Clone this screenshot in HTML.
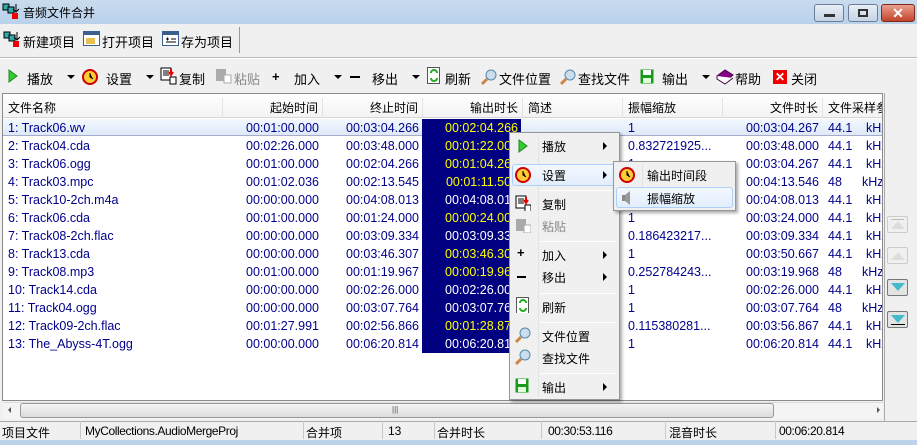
<!DOCTYPE html>
<html><head><meta charset="utf-8"><style>
*{margin:0;padding:0;box-sizing:border-box}
body{width:917px;height:445px;overflow:hidden;background:#f0f0f0;font-family:"Liberation Sans","Noto Sans CJK SC",sans-serif;font-size:12px;color:#000;position:relative}
.a{position:absolute;white-space:nowrap}
.title{left:0;top:0;width:917px;height:24px;background:linear-gradient(#c9dbee,#b9d1ea)}
.wb{top:4px;height:18px;border:1px solid #6c7d95;border-radius:3px;background:linear-gradient(#e8eef6,#c5d3e5)}
.list{left:2px;top:93px;width:881px;height:308px;background:#fff;border:1px solid #8a8a8a;overflow:hidden}
.hdr{left:0;top:0;width:881px;height:24px;background:linear-gradient(#fff,#f3f3f3);border-bottom:1px solid #d5d5d5}
.hc{position:absolute;top:4px;height:20px;border-right:1px solid #e3e3e3}
.row{position:absolute;left:0;width:881px;height:18px;color:#00008b;font-size:12.5px}
.row span{position:absolute;top:2px}
.menu{left:509px;top:132px;width:111px;height:268px;background:#f0f0f0;border:1px solid #979797;box-shadow:2px 2px 3px rgba(0,0,0,.35)}
.mi{position:absolute;left:32px}
.sep{position:absolute;left:30px;width:76px;height:1px;background:#d7d7d7;border-bottom:1px solid #fff}
.arr{position:absolute;left:93px;width:0;height:0;border-top:4px solid transparent;border-bottom:4px solid transparent;border-left:4px solid #000}
.hl{position:absolute;border:1px solid #aecff7;border-radius:3px;background:linear-gradient(#f3f8fe,#e2eefc)}
.ico{position:absolute;width:16px;height:16px}
.ss{position:absolute;top:-3px;width:1px;height:18px;background:#c8c8c8}
</style></head><body>
<div class="a title"></div>
<svg class="a" style="left:2px;top:3px" width="18" height="18"><rect x="1" y="1" width="6" height="6" fill="#3aa" stroke="#000"/><rect x="6" y="4" width="6" height="6" fill="#3aa" stroke="#000"/><rect x="10" y="10" width="6" height="6" fill="#e00"/><path d="M14 1v7M11 6l3 3 3-3" stroke="#000" fill="none"/></svg>
<div class="a" style="left:23px;top:4px;font-size:12px">音频文件合并</div>
<div class="a wb" style="left:814px;width:30px"><div class="a" style="left:9px;top:9px;width:11px;height:3px;background:#333"></div></div>
<div class="a wb" style="left:848px;width:30px"><div class="a" style="left:9px;top:4px;width:10px;height:8px;border:2px solid #333"></div></div>
<div class="a" style="left:881px;top:4px;width:34px;height:18px;border:1px solid #7a2a1a;border-radius:3px;background:linear-gradient(#e8a08e,#c4442a);color:#fff;font-weight:bold;font-size:14px;text-align:center;line-height:16px">✕</div>

<div class="a" style="left:0;top:24px;width:917px;height:33px;background:#f0f0f0"></div>
<svg class="a" style="left:3px;top:31px" width="18" height="18"><rect x="1" y="1" width="6" height="6" fill="#3aa" stroke="#000"/><rect x="6" y="4" width="6" height="6" fill="#3aa" stroke="#000"/><rect x="10" y="10" width="6" height="6" fill="#e00"/><path d="M14 1v7M11 6l3 3 3-3" stroke="#000" fill="none"/></svg>
<div class="a" style="left:23px;top:32px;font-size:13px">新建项目</div>
<svg class="a" style="left:83px;top:31px" width="18" height="16"><rect x="0.5" y="0.5" width="16" height="14" fill="#fff" stroke="#3b5f8f"/><rect x="1" y="1" width="15" height="3" fill="#3b5f8f"/><rect x="3" y="7" width="9" height="6" fill="#e8c050"/></svg>
<div class="a" style="left:102px;top:32px;font-size:13px">打开项目</div>
<svg class="a" style="left:162px;top:31px" width="18" height="16"><rect x="0.5" y="0.5" width="16" height="14" fill="#fff" stroke="#3b5f8f"/><rect x="1" y="1" width="15" height="3" fill="#3b5f8f"/><path d="M4 8h3M5.5 6.5v3M9 8h5M4 11h10" stroke="#000"/></svg>
<div class="a" style="left:181px;top:32px;font-size:13px">存为项目</div>
<div class="a" style="left:239px;top:27px;width:1px;height:26px;background:#999"></div>
<div class="a" style="left:0;top:57px;width:917px;height:1px;background:#b8b8b8"></div>
<div class="a" style="left:0;top:58px;width:917px;height:1px;background:#fff"></div>

<div class="a" style="top:69px;left:0;font-size:13px;width:917px;height:16px">
<svg class="a" style="left:8px;top:0" width="10" height="14"><path d="M1 1L9 7 1 13Z" fill="#3c3" stroke="#1a8a1a"/></svg>
<span class="a" style="left:27px">播放</span><span class="a" style="left:67px;top:6px;border-left:4px solid transparent;border-right:4px solid transparent;border-top:4px solid #000"></span>
<svg class="a" style="left:82px;top:0" width="16" height="16"><circle cx="8" cy="8" r="7" fill="#fc3" stroke="#c00" stroke-width="2"/><path d="M8 4v4l3 2" stroke="#000"/></svg>
<span class="a" style="left:106px">设置</span><span class="a" style="left:146px;top:6px;border-left:4px solid transparent;border-right:4px solid transparent;border-top:4px solid #000"></span>
<svg class="a" style="left:160px;top:-2px" width="18" height="18"><rect x="1" y="1" width="10" height="12" fill="#fff" stroke="#000"/><path d="M3 4h6M3 6h6M3 8h6" stroke="#000"/><path d="M11 2v5M9 5l2 3 2-3" stroke="#e00" stroke-width="2"/><rect x="10" y="10" width="6" height="7" fill="#fff" stroke="#000"/></svg>
<span class="a" style="left:179px">复制</span>
<svg class="a" style="left:215px;top:-2px" width="18" height="18"><rect x="1" y="2" width="10" height="12" fill="#aaa"/><rect x="9" y="8" width="7" height="8" fill="#fff" stroke="#aaa"/></svg>
<span class="a" style="left:234px;color:#888">粘贴</span>
<span class="a" style="left:272px;font-weight:bold">+</span>
<span class="a" style="left:294px">加入</span><span class="a" style="left:334px;top:6px;border-left:4px solid transparent;border-right:4px solid transparent;border-top:4px solid #000"></span>
<span class="a" style="left:350px;top:7px;width:10px;height:2px;background:#000"></span>
<span class="a" style="left:372px">移出</span><span class="a" style="left:412px;top:6px;border-left:4px solid transparent;border-right:4px solid transparent;border-top:4px solid #000"></span>
<svg class="a" style="left:427px;top:-2px" width="14" height="18"><rect x="0.5" y="0.5" width="12" height="16" fill="#fff" stroke="#555"/><path d="M4 6a3 3 0 0 1 6 0M10 11a3 3 0 0 1-6 0" stroke="#2a2" stroke-width="2" fill="none"/></svg>
<span class="a" style="left:445px">刷新</span>
<svg class="a" style="left:481px;top:0" width="16" height="16"><circle cx="10" cy="6" r="5" fill="#cde" stroke="#58a"/><path d="M6 10L1 15" stroke="#c84" stroke-width="3"/></svg>
<span class="a" style="left:499px">文件位置</span>
<svg class="a" style="left:560px;top:0" width="16" height="16"><circle cx="10" cy="6" r="5" fill="#cde" stroke="#58a"/><path d="M6 10L1 15" stroke="#c84" stroke-width="3"/></svg>
<span class="a" style="left:578px">查找文件</span>
<svg class="a" style="left:640px;top:0" width="15" height="16"><rect x="0.5" y="0.5" width="13" height="14" fill="#1a9a1a"/><rect x="3" y="1" width="8" height="5" fill="#fff"/><rect x="3" y="9" width="8" height="5" fill="#dfd"/></svg>
<span class="a" style="left:662px">输出</span><span class="a" style="left:702px;top:6px;border-left:4px solid transparent;border-right:4px solid transparent;border-top:4px solid #000"></span>
<svg class="a" style="left:716px;top:0" width="18" height="16"><path d="M1 7L9 1 17 6 9 13Z" fill="#808" stroke="#404"/><path d="M1 7v3l8 5 8-6" stroke="#404" fill="#fff"/></svg>
<span class="a" style="left:735px">帮助</span>
<div class="a" style="left:773px;top:1px;width:14px;height:14px;background:#e00;color:#fff;font-weight:bold;font-size:12px;line-height:14px;text-align:center">✕</div>
<span class="a" style="left:791px">关闭</span>
</div>

<div class="a list">
<div class="a hdr">
<div class="hc" style="left:0;width:220px"><span class="a" style="left:5px;top:1px">文件名称</span></div>
<div class="hc" style="left:220px;width:100px"><span class="a" style="right:4px;top:1px">起始时间</span></div>
<div class="hc" style="left:320px;width:100px"><span class="a" style="right:4px;top:1px">终止时间</span></div>
<div class="hc" style="left:420px;width:100px"><span class="a" style="right:4px;top:1px">输出时长</span></div>
<div class="hc" style="left:520px;width:100px"><span class="a" style="left:5px;top:1px">简述</span></div>
<div class="hc" style="left:620px;width:100px"><span class="a" style="left:5px;top:1px">振幅缩放</span></div>
<div class="hc" style="left:720px;width:100px"><span class="a" style="right:4px;top:1px">文件时长</span></div>
<div class="hc" style="left:820px;width:70px"><span class="a" style="left:5px;top:1px">文件采样参</span></div>
</div>
<div class="a" style="left:419px;top:25px;width:99px;height:234px;background:#000080"></div>
<div class="a" style="left:0;top:25px;width:419px;height:17px;background:linear-gradient(#f3f8fe,#dde9f8);border-bottom:1px solid #aac"></div>
<div class="a" style="left:518px;top:25px;width:363px;height:17px;background:linear-gradient(#f3f8fe,#dde9f8);border-bottom:1px solid #aac"></div>
<div id="rows"></div>
</div>

<script>
var d=[["1: Track06.wv","00:01:00.000","00:03:04.266","00:02:04.266","1","00:03:04.267","44.1",1],
["2: Track04.cda","00:02:26.000","00:03:48.000","00:01:22.000","0.832721925...","00:03:48.000","44.1",1],
["3: Track06.ogg","00:01:00.000","00:02:04.266","00:01:04.267","1","00:03:04.267","44.1",1],
["4: Track03.mpc","00:01:02.036","00:02:13.545","00:01:11.509","","00:04:13.546","48",1],
["5: Track10-2ch.m4a","00:00:00.000","00:04:08.013","00:04:08.013","","00:04:08.013","44.1",0],
["6: Track06.cda","00:01:00.000","00:01:24.000","00:00:24.000","1","00:03:24.000","44.1",1],
["7: Track08-2ch.flac","00:00:00.000","00:03:09.334","00:03:09.334","0.186423217...","00:03:09.334","44.1",0],
["8: Track13.cda","00:00:00.000","00:03:46.307","00:03:46.307","1","00:03:50.667","44.1",1],
["9: Track08.mp3","00:01:00.000","00:01:19.967","00:00:19.967","0.252784243...","00:03:19.968","48",1],
["10: Track14.cda","00:00:00.000","00:02:26.000","00:02:26.000","1","00:02:26.000","44.1",0],
["11: Track04.ogg","00:00:00.000","00:03:07.764","00:03:07.764","1","00:03:07.764","48",0],
["12: Track09-2ch.flac","00:01:27.991","00:02:56.866","00:01:28.876","0.115380281...","00:03:56.867","44.1",1],
["13: The_Abyss-4T.ogg","00:00:00.000","00:06:20.814","00:06:20.814","1","00:06:20.814","44.1",0]];
var h="";d.forEach(function(r,i){var t=25+i*18;var k=r[6]=="48"?"left:859px":"left:863px";
h+='<div class="row" style="top:'+t+'px"><span style="left:5px">'+r[0]+'</span><span style="right:565px">'+r[1]+'</span><span style="right:465px">'+r[2]+'</span><span style="right:366px;color:'+(r[7]?'#ff0':'#fff')+'">'+r[3]+'</span><span style="left:625px">'+r[4]+'</span><span style="right:65px">'+r[5]+'</span><span style="left:825px">'+r[6]+'</span><span style="'+k+'">kHz</span></div>';});
document.getElementById("rows").innerHTML=h;
</script>

<div class="a" style="left:3px;top:402px;width:880px;height:17px;background:#f4f4f4;border-top:1px solid #ddd"></div>
<div class="a" style="left:20px;top:403px;width:754px;height:15px;border:1px solid #999;border-radius:3px;background:linear-gradient(#f4f4f4,#dcdcdc)"></div>
<div class="a" style="left:392px;top:405px;font-size:8px;color:#555">|||</div>
<div class="a" style="left:8px;top:407px;border-top:3px solid transparent;border-bottom:3px solid transparent;border-right:3px solid #555"></div>
<div class="a" style="left:877px;top:407px;border-top:3px solid transparent;border-bottom:3px solid transparent;border-left:3px solid #555"></div>

<div class="a" style="left:884px;top:93px;width:33px;height:328px;background:#f0f0f0;border-left:1px solid #aaa"></div>
<div class="a" style="left:887px;top:216px;width:21px;height:17px;border:1px solid #ccc;border-radius:2px;background:#f0f0f0"><div class="a" style="left:3px;top:2px;width:13px;height:1px;background:#bbb"></div><div class="a" style="left:3px;top:4px;border-left:7px solid transparent;border-right:7px solid transparent;border-bottom:8px solid #ddd"></div></div>
<div class="a" style="left:887px;top:247px;width:21px;height:17px;border:1px solid #ccc;border-radius:2px;background:#f0f0f0"><div class="a" style="left:3px;top:4px;border-left:7px solid transparent;border-right:7px solid transparent;border-bottom:8px solid #ddd"></div></div>
<div class="a" style="left:887px;top:279px;width:21px;height:17px;border:1px solid #777;border-radius:2px;background:#e4e4e4"><div class="a" style="left:3px;top:3px;border-left:7px solid transparent;border-right:7px solid transparent;border-top:8px solid #4bc"></div></div>
<div class="a" style="left:887px;top:311px;width:21px;height:17px;border:1px solid #777;border-radius:2px;background:#e4e4e4"><div class="a" style="left:3px;top:3px;border-left:7px solid transparent;border-right:7px solid transparent;border-top:8px solid #4bc"></div><div class="a" style="left:3px;top:12px;width:14px;height:1px;background:#000"></div></div>

<div class="a" style="left:0;top:421px;width:917px;height:24px;background:#f0f0f0;border-top:1px solid #aaa"></div>
<div class="a" style="left:0;top:440px;width:917px;height:5px;background:#bcd3ea"></div>
<div class="a" style="top:424px;left:0;font-size:12px;width:917px;height:16px">
<span class="a" style="left:2px">项目文件</span><span class="ss" style="left:80px"></span>
<span class="a" style="left:85px;letter-spacing:-.4px">MyCollections.AudioMergeProj</span><span class="ss" style="left:303px"></span>
<span class="a" style="left:306px">合并项</span><span class="ss" style="left:382px"></span>
<span class="a" style="left:388px">13</span><span class="ss" style="left:434px"></span>
<span class="a" style="left:437px">合并时长</span><span class="ss" style="left:541px"></span>
<span class="a" style="left:548px;letter-spacing:-.4px">00:30:53.116</span><span class="ss" style="left:665px"></span>
<span class="a" style="left:669px">混音时长</span><span class="ss" style="left:775px"></span>
<span class="a" style="left:779px;letter-spacing:-.4px">00:06:20.814</span>
</div>

<div class="a menu">
<div class="a" style="left:28px;top:2px;width:1px;height:262px;background:#e2e3e3"></div>
<div class="hl" style="left:2px;top:31px;width:106px;height:22px"></div>
<svg class="ico" style="left:8px;top:6px" width="10" height="14"><path d="M1 1L9 7 1 13Z" fill="#3c3" stroke="#1a8a1a"/></svg>
<span class="mi" style="top:5px">播放</span><span class="arr" style="top:9px"></span>
<svg class="ico" style="left:5px;top:34px"><circle cx="8" cy="8" r="7" fill="#fc3" stroke="#c00" stroke-width="2"/><path d="M8 4v4l3 2" stroke="#000"/></svg>
<span class="mi" style="top:34px">设置</span><span class="arr" style="top:38px"></span>
<div class="sep" style="top:57px"></div>
<svg class="ico" style="left:5px;top:62px" width="18" height="18"><rect x="1" y="1" width="10" height="12" fill="#fff" stroke="#000"/><path d="M3 4h6M3 6h6M3 8h6" stroke="#000"/><path d="M11 2v5M9 5l2 3 2-3" stroke="#e00" stroke-width="2"/><rect x="10" y="10" width="6" height="7" fill="#fff" stroke="#000"/></svg>
<span class="mi" style="top:63px">复制</span>
<svg class="ico" style="left:5px;top:84px" width="18" height="18"><rect x="1" y="2" width="10" height="12" fill="#aaa"/><rect x="9" y="8" width="7" height="8" fill="#fff" stroke="#aaa"/></svg>
<span class="mi" style="top:85px;color:#888">粘贴</span>
<div class="sep" style="top:108px"></div>
<span class="a" style="left:7px;top:112px;font-weight:bold;font-size:13px">+</span>
<span class="mi" style="top:114px">加入</span><span class="arr" style="top:118px"></span>
<span class="a" style="left:7px;top:143px;width:9px;height:2px;background:#000"></span>
<span class="mi" style="top:136px">移出</span><span class="arr" style="top:140px"></span>
<div class="sep" style="top:160px"></div>
<svg class="ico" style="left:6px;top:164px" width="14" height="18"><rect x="0.5" y="0.5" width="12" height="16" fill="#fff" stroke="#555"/><path d="M4 6a3 3 0 0 1 6 0M10 11a3 3 0 0 1-6 0" stroke="#2a2" stroke-width="2" fill="none"/></svg>
<span class="mi" style="top:166px">刷新</span>
<div class="sep" style="top:189px"></div>
<svg class="ico" style="left:5px;top:194px"><circle cx="10" cy="6" r="5" fill="#cde" stroke="#58a"/><path d="M6 10L1 15" stroke="#c84" stroke-width="3"/></svg>
<span class="mi" style="top:195px">文件位置</span>
<svg class="ico" style="left:5px;top:216px"><circle cx="10" cy="6" r="5" fill="#cde" stroke="#58a"/><path d="M6 10L1 15" stroke="#c84" stroke-width="3"/></svg>
<span class="mi" style="top:217px">查找文件</span>
<div class="sep" style="top:240px"></div>
<svg class="ico" style="left:5px;top:245px" width="15" height="16"><rect x="0.5" y="0.5" width="13" height="14" fill="#1a9a1a"/><rect x="3" y="1" width="8" height="5" fill="#fff"/><rect x="3" y="9" width="8" height="5" fill="#dfd"/></svg>
<span class="mi" style="top:246px">输出</span><span class="arr" style="top:250px"></span>
</div>

<div class="a" style="left:613px;top:161px;width:123px;height:50px;background:#f0f0f0;border:1px solid #979797;box-shadow:2px 2px 3px rgba(0,0,0,.35)">
<div class="a" style="left:28px;top:2px;width:1px;height:44px;background:#e2e3e3"></div>
<div class="hl" style="left:2px;top:25px;width:117px;height:21px"></div>
<svg class="ico" style="left:5px;top:5px"><circle cx="8" cy="8" r="7" fill="#fc3" stroke="#c00" stroke-width="2"/><path d="M8 4v4l3 2" stroke="#000"/></svg>
<span class="a" style="left:33px;top:5px">输出时间段</span>
<svg class="ico" style="left:6px;top:28px"><rect x="2" y="5" width="3" height="6" fill="#888"/><path d="M5 5L10 1V15L5 11Z" fill="#999"/></svg>
<span class="a" style="left:33px;top:28px">振幅缩放</span>
</div>
</body></html>
